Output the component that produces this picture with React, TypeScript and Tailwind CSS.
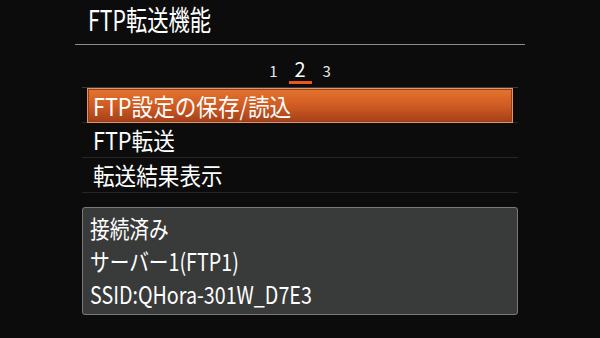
const jp = { fontFamily: '"Noto Sans CJK JP", "Noto Sans", sans-serif' };

const rows = ['FTP設定の保存/読込', 'FTP転送', '転送結果表示'];
const info = ['接続済み', 'サーバー1(FTP1)', 'SSID:QHora-301W_D7E3'];

export default function App() {
  const selected = 0;

  return (
    <div
      className="flex h-[338px] w-[600px] flex-col items-center overflow-hidden bg-[#0c0c0c] text-white"
      style={jp}
    >
      <div className="flex h-[45px] w-[450px] shrink-0 items-start border-b border-[#8c8c8c] pl-[13px]">
        <span className="mt-[1px] origin-left scale-x-[0.76] whitespace-nowrap text-[28px] leading-[36px]">
          FTP転送機能
        </span>
      </div>

      <div className="flex h-[42px] w-full shrink-0 items-start justify-center gap-[11px] pt-[14px]">
        <span className="mt-[4px] text-[15px] leading-[15px] text-[#e8e8e8]">1</span>
        <div className="flex flex-col items-center">
          <span className="text-[20px] leading-[20px]">2</span>
          <span className="mt-[2px] h-[3px] w-[23px] bg-[#e8581c]" />
        </div>
        <span className="mt-[4px] text-[15px] leading-[15px] text-[#e8e8e8]">3</span>
      </div>

      <div className="w-[436px] shrink-0 border-t border-[#3a3a3a]">
        {rows.map((row, index) => (
          <div className="h-[35px] border-b border-[#262626] px-[5px]" key={row}>
            {index === selected ? (
              <div className="flex h-[35px] items-center border border-[#e0986a] bg-gradient-to-b from-[#e4742f] via-[#d05b22] to-[#a5401a] px-[5px] shadow-[inset_0_0_0_1px_#9a3c16]">
                <span className="origin-left scale-x-[0.9] whitespace-nowrap text-[24px] leading-[30px]">
                  {row}
                </span>
              </div>
            ) : (
              <div className="flex h-[34px] items-center px-[6px]">
                <span className="origin-left scale-x-[0.9] whitespace-nowrap text-[24px] leading-[30px]">
                  {row}
                </span>
              </div>
            )}
          </div>
        ))}
      </div>

      <div className="mt-[14px] flex h-[108px] w-[436px] shrink-0 flex-col rounded-[3px] border border-[#7a7a7a] bg-[#393a3a] px-[7px] pt-[3px]">
        {info.map((line) => (
          <span
            className="h-[33px] origin-left scale-x-[0.82] whitespace-nowrap text-[24px] leading-[33px]"
            key={line}
          >
            {line}
          </span>
        ))}
      </div>
    </div>
  );
}
